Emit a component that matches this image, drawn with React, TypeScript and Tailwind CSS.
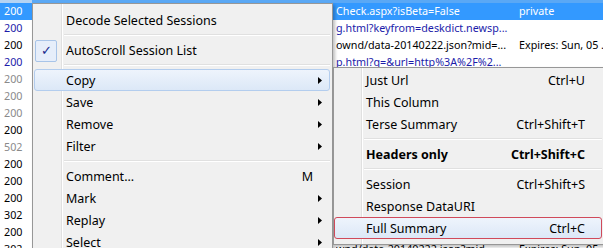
import React from "react";

type Tone = "sel" | "blue" | "black" | "gray";

const rows: { code: string; tone: Tone; url: string; cache: string }[] = [
  { code: "200", tone: "sel", url: "Check.aspx?isBeta=False", cache: "private" },
  { code: "200", tone: "blue", url: "g.html?keyfrom=deskdict.newsp...", cache: "" },
  { code: "200", tone: "black", url: "ownd/data-20140222.json?mid=...", cache: "Expires: Sun, 05 ..." },
  { code: "200", tone: "blue", url: "p.html?q=&url=http%3A%2F%2...", cache: "" },
  { code: "200", tone: "gray", url: "", cache: "" },
  { code: "200", tone: "gray", url: "", cache: "" },
  { code: "200", tone: "gray", url: "", cache: "" },
  { code: "200", tone: "black", url: "", cache: "" },
  { code: "502", tone: "gray", url: "", cache: "" },
  { code: "200", tone: "black", url: "", cache: "" },
  { code: "200", tone: "black", url: "", cache: "" },
  { code: "200", tone: "black", url: "", cache: "" },
  { code: "302", tone: "black", url: "", cache: "" },
  { code: "200", tone: "black", url: "", cache: "" },
  { code: "302", tone: "black", url: "wnd/data-20140222.json?mid=...", cache: "Expires: Sun, 05 ..." },
];

const toneClass: Record<Tone, string> = {
  sel: "bg-[#3399ff] text-white",
  blue: "text-[#1c1caa]",
  black: "text-black",
  gray: "text-[#8a8a8a]",
};

function Arrow() {
  return (
    <svg width="4" height="7" viewBox="0 0 4 7" className="absolute right-[7px] top-[7px]">
      <path d="M0 0 L4 3.5 L0 7 Z" fill="#000" />
    </svg>
  );
}

function Sep() {
  return (
    <div className="flex h-[8px] flex-col justify-center pl-[30px]">
      <div className="h-px bg-[#e0e0e0]" />
      <div className="h-px bg-white" />
    </div>
  );
}

function Item({
  label,
  shortcut,
  arrow,
  bold,
  active,
  red,
  checked,
}: {
  label: string;
  shortcut?: string;
  arrow?: boolean;
  bold?: boolean;
  active?: boolean;
  red?: boolean;
  checked?: boolean;
}) {
  return (
    <div
      className={
        "relative flex h-[22px] items-center rounded-[3px] border pt-[2px] " +
        (red
          ? "border-[#d04a5a] bg-gradient-to-b from-[#eef4fc] to-[#dce8f7]"
          : active
          ? "border-[#b3cdee] bg-gradient-to-b from-[#eef4fc] to-[#dce8f7]"
          : "border-transparent")
      }
    >
      {checked && (
        <div className="absolute left-0 top-0 flex h-[22px] w-[22px] items-center justify-center rounded-[2px] border border-[#a8c4e8] bg-[#e6eefa] text-[13px] text-[#1a2a8c]">
          ✓
        </div>
      )}
      <span className={"pl-[31px] " + (bold ? "font-bold" : "")}>{label}</span>
      {shortcut && (
        <span className={"ml-auto pr-[16px] " + (bold ? "font-bold" : "")}>{shortcut}</span>
      )}
      {arrow && <Arrow />}
    </div>
  );
}

export default function App() {
  return (
    <div
      className="relative h-[248px] w-[603px] overflow-hidden bg-white"
      style={{ fontFamily: '"Noto Sans", "Open Sans", sans-serif' }}
    >
      <div className="flex h-[3px]">
        <div className="w-[32px] bg-[#b5d3f3]" />
        <div className="flex-1 bg-[#5aa8f5]" />
      </div>
      <div className="flex flex-col text-[10.75px] leading-[17px]">
        {rows.map((r, i) => (
          <div key={i} className={"flex h-[17px] items-center whitespace-nowrap " + toneClass[r.tone]}>
            <span className="w-[32px] shrink-0 pl-[4px]">{r.code}</span>
            <span className="w-[304px] shrink-0" />
            <span className="w-[183px] shrink-0 overflow-hidden">{r.url}</span>
            <span className="flex-1 overflow-hidden">{r.cache}</span>
          </div>
        ))}
      </div>

      {/* main context menu */}
      <div className="absolute left-[32px] top-[3px] h-[260px] w-[301px] border-x border-t border-[#979797] bg-[#f0f0f0] pl-[1px] pr-[2px] pt-[5px] text-[12.5px] text-black shadow-[2px_2px_3px_rgba(0,0,0,0.25)]">
        <div className="absolute left-[28px] top-0 h-full w-px bg-[#e0e0e0]" />
        <div className="absolute left-[29px] top-0 h-full w-px bg-white" />
        <div className="relative flex flex-col">
          <Item label="Decode Selected Sessions" />
          <Sep />
          <Item label="AutoScroll Session List" checked />
          <Sep />
          <Item label="Copy" arrow active />
          <Item label="Save" arrow />
          <Item label="Remove" arrow />
          <Item label="Filter" arrow />
          <Sep />
          <Item label="Comment..." shortcut="M" />
          <Item label="Mark" arrow />
          <Item label="Replay" arrow />
          <Item label="Select" arrow />
        </div>
      </div>

      {/* copy submenu */}
      <div className="absolute left-[333px] top-[67px] h-[178px] w-[272px] border border-[#979797] bg-[#f0f0f0] pr-[2px] pt-[1px] text-[12.5px] text-black shadow-[2px_2px_3px_rgba(0,0,0,0.25)]">
        <div className="absolute left-[27px] top-0 h-full w-px bg-[#e0e0e0]" />
        <div className="absolute left-[28px] top-0 h-full w-px bg-white" />
        <div className="relative flex flex-col">
          <Item label="Just Url" shortcut="Ctrl+U" />
          <Item label="This Column" />
          <Item label="Terse Summary" shortcut="Ctrl+Shift+T" />
          <Sep />
          <Item label="Headers only" shortcut="Ctrl+Shift+C" bold />
          <Sep />
          <Item label="Session" shortcut="Ctrl+Shift+S" />
          <Item label="Response DataURI" />
          <Item label="Full Summary" shortcut="Ctrl+C" red />
        </div>
      </div>
    </div>
  );
}
